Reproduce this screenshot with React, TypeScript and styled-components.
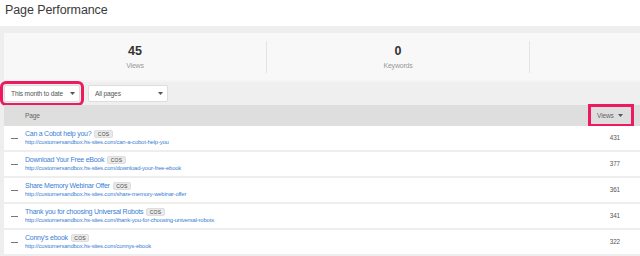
import styled, { createGlobalStyle } from 'styled-components'

type PageRow = {
  title: string
  url: string
  views: number
}

const rows: PageRow[] = [
  { title: 'Can a Cobot help you?', url: 'http://customersandbox.hs-sites.com/can-a-cobot-help-you', views: 431 },
  { title: 'Download Your Free eBook', url: 'http://customersandbox.hs-sites.com/download-your-free-ebook', views: 377 },
  { title: 'Share Memory Webinar Offer', url: 'http://customersandbox.hs-sites.com/share-memory-webinar-offer', views: 361 },
  { title: 'Thank you for choosing Universal Robots', url: 'http://customersandbox.hs-sites.com/thank-you-for-choosing-universal-robots', views: 341 },
  { title: "Conny's ebook", url: 'http://customersandbox.hs-sites.com/connys-ebook', views: 322 }
]

const stats = [
  { value: '45', label: 'Views' },
  { value: '0', label: 'Keywords' },
  { value: '', label: 'I' }
]

const Caret = () => (
  <svg width="5" height="3" viewBox="0 0 5 3">
    <path d="M0 0 L5 0 L2.5 3 Z" fill="#555" />
  </svg>
)

const App = () => {
  return (
    <>
      <GlobalStyle />
      <Page>
        <TitleBar>Page Performance</TitleBar>
        <Body>
          <StatsCard>
            {stats.map((s, i) => (
              <Stat key={i} $last={i === stats.length - 1}>
                {s.value && <StatValue>{s.value}</StatValue>}
                <StatLabel $edge={i === stats.length - 1}>{s.label}</StatLabel>
              </Stat>
            ))}
          </StatsCard>

          <FilterBar>
            <Select $width={76} $highlight>
              <span>This month to date</span>
              <Caret />
            </Select>
            <Select $width={80}>
              <span>All pages</span>
              <Caret />
            </Select>
          </FilterBar>

          <HeaderRow>
            <HeaderCell>Page</HeaderCell>
            <SortButton>
              Views <Caret />
            </SortButton>
          </HeaderRow>

          {rows.map((row) => (
            <Row key={row.url}>
              <Dash />
              <RowMain>
                <RowTitle>
                  <Link>{row.title}</Link>
                  <Badge>COS</Badge>
                </RowTitle>
                <Url>{row.url}</Url>
              </RowMain>
              <Count>{row.views}</Count>
            </Row>
          ))}
        </Body>
      </Page>
    </>
  )
}

const GlobalStyle = createGlobalStyle`
  html, body {
    margin: 0;
    padding: 0;
    background: #fff;
    font-family: "Liberation Sans", Arial, sans-serif;
  }
`

const Page = styled.div`
  width: 640px;
  height: 256px;
  overflow: hidden;
`

const TitleBar = styled.h1`
  margin: 0;
  height: 26px;
  padding: 3px 0 0 5px;
  box-sizing: border-box;
  font-size: 12.5px;
  font-weight: normal;
  color: #3a3a3a;
  line-height: 14px;
  letter-spacing: -0.1px;
`

const Body = styled.div`
  background: #eeeeee;
  padding: 7px 0 0 4px;
  display: flex;
  flex-direction: column;
`

const StatsCard = styled.div`
  display: flex;
  height: 47px;
  background: #f8f8f8;
  align-items: center;
`

const Stat = styled.div<{ $last?: boolean }>`
  flex: 0 0 262px;
  height: 32px;
  display: flex;
  flex-direction: column;
  align-items: center;
  justify-content: center;
  border-right: ${(p) => (p.$last ? 'none' : '1px solid #e4e4e4')};
`

const StatValue = styled.div`
  font-size: 12.5px;
  font-weight: bold;
  color: #333;
  line-height: 13px;
`

const StatLabel = styled.div<{ $edge?: boolean }>`
  font-size: 7px;
  letter-spacing: -0.2px;
  color: #999;
  margin-top: 4px;
  align-self: ${(p) => (p.$edge ? 'flex-start' : 'center')};
  margin-left: ${(p) => (p.$edge ? '110px' : '0')};
  padding-top: ${(p) => (p.$edge ? '14px' : '0')};
`

const FilterBar = styled.div`
  display: flex;
  align-items: center;
  gap: 8px;
  height: 25px;
  background: #efefef;
  border-top: 2px solid #f4f4f4;
  box-sizing: border-box;
`

const Select = styled.div<{ $width: number; $highlight?: boolean }>`
  width: ${(p) => p.$width}px;
  height: 17px;
  box-sizing: border-box;
  background: #fff;
  border: 1px solid #ddd;
  border-radius: 2px;
  display: flex;
  align-items: center;
  justify-content: space-between;
  padding: 0 4px 0 6px;
  font-size: 6.6px;
  letter-spacing: -0.15px;
  color: #555;
  white-space: nowrap;
  outline: ${(p) => (p.$highlight ? '3px solid #ec1a5e' : 'none')};
  outline-offset: 1px;
`

const HeaderRow = styled.div`
  display: flex;
  align-items: center;
  justify-content: space-between;
  height: 21px;
  background: #dedede;
  padding-left: 21px;
`

const HeaderCell = styled.span`
  font-size: 6.6px;
  letter-spacing: -0.15px;
  color: #666;
`

const SortButton = styled.span`
  display: flex;
  align-items: center;
  gap: 4px;
  width: 40px;
  height: 17px;
  box-sizing: border-box;
  padding-left: 6px;
  margin-right: 9px;
  font-size: 6.6px;
  letter-spacing: -0.15px;
  color: #666;
  outline: 3px solid #ec1a5e;
`

const Row = styled.div`
  display: flex;
  align-items: center;
  height: 26px;
  background: #fff;
  border-bottom: 2px solid #eeeeee;
  box-sizing: border-box;
  padding-left: 7px;
`

const Dash = styled.span`
  width: 7px;
  height: 1px;
  background: #777;
  margin-top: 1px;
`

const RowMain = styled.div`
  flex: 1;
  margin-left: 7px;
  display: flex;
  flex-direction: column;
  gap: 1px;
`

const RowTitle = styled.div`
  display: flex;
  align-items: center;
  gap: 3px;
  height: 8px;
`

const Link = styled.span`
  font-size: 7px;
  letter-spacing: -0.25px;
  line-height: 8px;
  color: #3b80d4;
`

const Badge = styled.span`
  font-size: 5px;
  color: #444;
  background: #eaeaea;
  border: 1px solid #ddd;
  border-radius: 2px;
  padding: 0 2.5px;
  line-height: 6px;
  letter-spacing: 0.2px;
`

const Url = styled.span`
  font-size: 5.9px;
  letter-spacing: -0.17px;
  line-height: 7px;
  color: #3b80d4;
`

const Count = styled.span`
  font-size: 6.3px;
  letter-spacing: -0.1px;
  color: #555;
  margin-right: 20px;
  margin-top: -1px;
`

export default App
